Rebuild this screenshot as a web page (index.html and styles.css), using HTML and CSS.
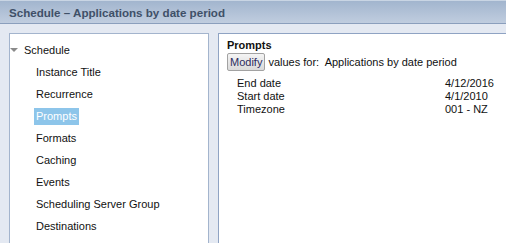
FILE: index.html
```html
<!DOCTYPE html>
<html lang="en">
<head>
    <meta charset="UTF-8">
    <title>Schedule - Applications by date period</title>
    <link rel="stylesheet" href="styles.css">
</head>
<body>
<!-- Window title -->
<div class="titlebar">Schedule &ndash; Applications by date period</div>

<div class="main">
    <!-- Navigation tree -->
    <div class="panel tree">
        <div class="tree-root"><span class="caret"></span>Schedule</div>
        <div class="tree-item">Instance Title</div>
        <div class="tree-item">Recurrence</div>
        <div class="tree-item"><span class="selected">Prompts</span></div>
        <div class="tree-item">Formats</div>
        <div class="tree-item">Caching</div>
        <div class="tree-item">Events</div>
        <div class="tree-item">Scheduling Server Group</div>
        <div class="tree-item">Destinations</div>
    </div>

    <!-- Detail pane -->
    <div class="panel detail">
        <div class="heading">Prompts</div>
        <div class="modify-row">
            <button class="btn">Modify</button>
            <span>values for:&nbsp; Applications by date period</span>
        </div>
        <div class="prompt-list">
            <span>End date</span><span>4/12/2016</span>
            <span>Start date</span><span>4/1/2010</span>
            <span>Timezone</span><span>001 - NZ</span>
        </div>
    </div>
</div>
</body>
</html>
```
FILE: styles.css
```css
html, body {
    margin: 0;
    height: 100%;
    overflow: hidden;
}

body {
    background-color: #e4e9f2;
    font-family: "Liberation Sans", Arial, sans-serif;
    font-size: 11px;
    color: #111;
}

/* Window title bar */
.titlebar {
    height: 22px;
    line-height: 23px;
    padding-left: 9px;
    border-top: 1px solid #c9d5e4;
    border-bottom: 1px solid #8b9fbd;
    background: linear-gradient(#a2b5ce, #c0cddf);
    font-weight: bold;
    font-size: 11.6px;
    color: #3f5068;
}

.main {
    display: flex;
    gap: 9px;
    padding: 9px 0 0 9px;
    height: 220px;
}

.panel {
    background-color: #fff;
    border: 1px solid #a3b4cd;
}

/* Tree */
.tree {
    width: 198px;
    flex: none;
    padding-top: 5px;
}

.tree-root,
.tree-item {
    height: 22px;
    line-height: 22px;
    display: flex;
    align-items: center;
}

.tree-root {
    padding-left: 14px;
    position: relative;
}

.caret {
    position: absolute;
    left: 0;
    top: 9px;
    width: 0;
    height: 0;
    border-left: 4px solid transparent;
    border-right: 4px solid transparent;
    border-top: 4px solid #8a8a8a;
}

.tree-item {
    padding-left: 26px;
}

.selected {
    background-color: #8dc5ea;
    color: #fff;
    padding: 0 2px;
    margin-left: -2px;
    line-height: 17px;
}

/* Detail pane */
.detail {
    width: 300px;
    flex: none;
    border-color: #8fa3c3;
    padding: 4px 0 0 8px;
}

.heading {
    font-weight: bold;
    line-height: 15px;
}

.modify-row {
    display: flex;
    align-items: center;
    gap: 3px;
}

.btn {
    font-family: inherit;
    font-size: 11px;
    color: #2b2b5e;
    height: 18px;
    padding: 0 2px;
    border: 1px solid #a2a2a2;
    border-radius: 2px;
    background: linear-gradient(#f4f4f4, #dadada);
}

.prompt-list {
    display: grid;
    grid-template-columns: 208px auto;
    line-height: 13px;
    padding: 6px 0 0 10px;
}
```
